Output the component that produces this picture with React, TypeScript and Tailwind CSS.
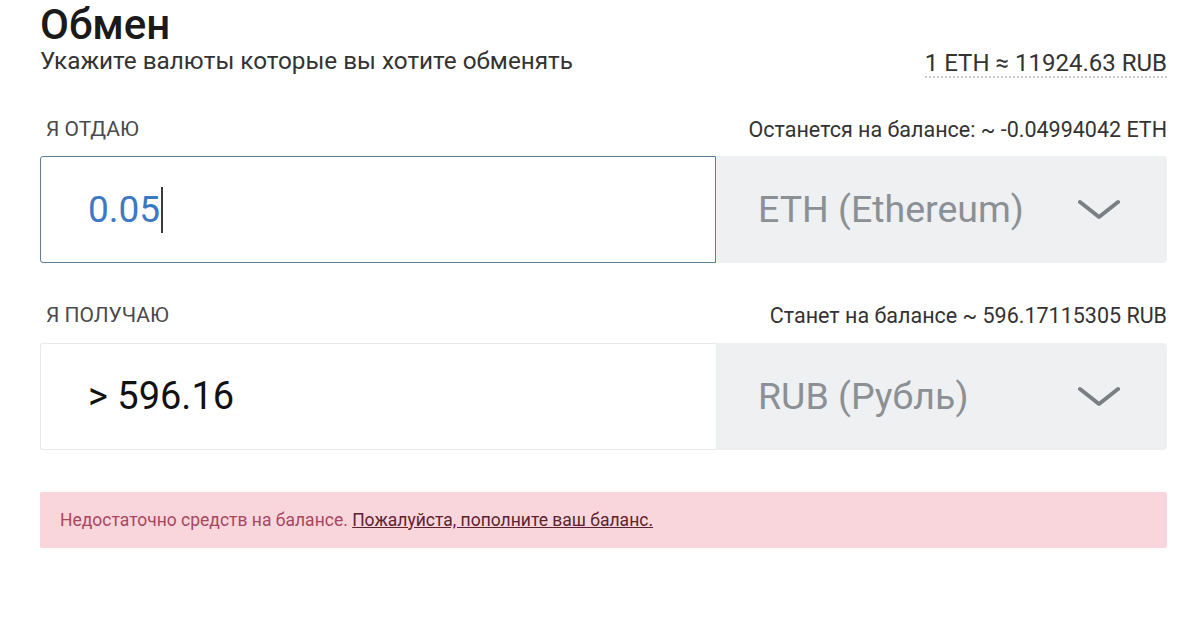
import React from "react";

function Chevron() {
  return (
    <svg width="42" height="22" viewBox="0 0 42 22" fill="none">
      <path d="M2 3 L21 18 L40 3" stroke="#7b7e82" strokeWidth="4" strokeLinecap="round" strokeLinejoin="round" />
    </svg>
  );
}

export default function App() {
  return (
    <div className="w-[1200px] h-[628px] bg-white overflow-hidden text-[#222]" style={{ fontFamily: "Roboto, 'Noto Sans', sans-serif" }}>
      <div className="pl-[40px] pr-[33px]">
        <h1 className="text-[42px] font-medium leading-[50px] text-[#1a1a1a]">Обмен</h1>
        <div className="flex items-center justify-between h-[30px] -mt-[4px]">
          <p className="text-[24.3px] leading-[30px] text-[#333]">Укажите валюты которые вы хотите обменять</p>
          <span className="text-[24px] leading-[26px] text-[#333] border-b-2 border-dotted border-[#c8c8c8] pt-[5px]">1 ETH ≈ 11924.63 RUB</span>
        </div>

        <div className="flex items-center justify-between mt-[42px] h-[24px]">
          <span className="text-[21px] text-[#4a4a4a] pl-[6px]">Я ОТДАЮ</span>
          <span className="text-[21.5px] text-[#333]">Останется на балансе: ~ -0.04994042 ETH</span>
        </div>
        <div className="flex mt-[14px] h-[107px]">
          <div className="w-[676px] border border-[#5d7d9c] rounded-l-[3px] flex items-center pl-[47px]">
            <span className="text-[37px] text-[#3d78c2] border-r-2 border-[#3a3a3a] leading-[46px] pr-[1px]">0.05</span>
          </div>
          <div className="flex-1 bg-[#eef0f2] rounded-r-[4px] flex items-center justify-between pl-[42px] pr-[47px]">
            <span className="text-[37.5px] text-[#8c9095]">ETH (Ethereum)</span>
            <Chevron />
          </div>
        </div>

        <div className="flex items-center justify-between mt-[41px] h-[24px]">
          <span className="text-[21px] text-[#4a4a4a] pl-[6px]">Я ПОЛУЧАЮ</span>
          <span className="text-[21.5px] text-[#333]">Станет на балансе ~ 596.17115305 RUB</span>
        </div>
        <div className="flex mt-[15px] h-[107px]">
          <div className="w-[676px] border border-[#e6e8ea] border-r-0 rounded-l-[3px] flex items-center pl-[47px]">
            <span className="text-[38px] text-[#111]">&gt; 596.16</span>
          </div>
          <div className="flex-1 bg-[#eef0f2] rounded-r-[4px] flex items-center justify-between pl-[42px] pr-[47px]">
            <span className="text-[37.5px] text-[#8c9095]">RUB (Рубль)</span>
            <Chevron />
          </div>
        </div>

        <div className="mt-[42px] h-[56px] bg-[#f8d6db] rounded-[2px] flex items-center pl-[20px] text-[17.5px]">
          <span className="text-[#a8465f]">Недостаточно средств на балансе.&nbsp;</span>
          <a className="text-[#5e2230] underline">Пожалуйста, пополните ваш баланс.</a>
        </div>
      </div>
    </div>
  );
}
